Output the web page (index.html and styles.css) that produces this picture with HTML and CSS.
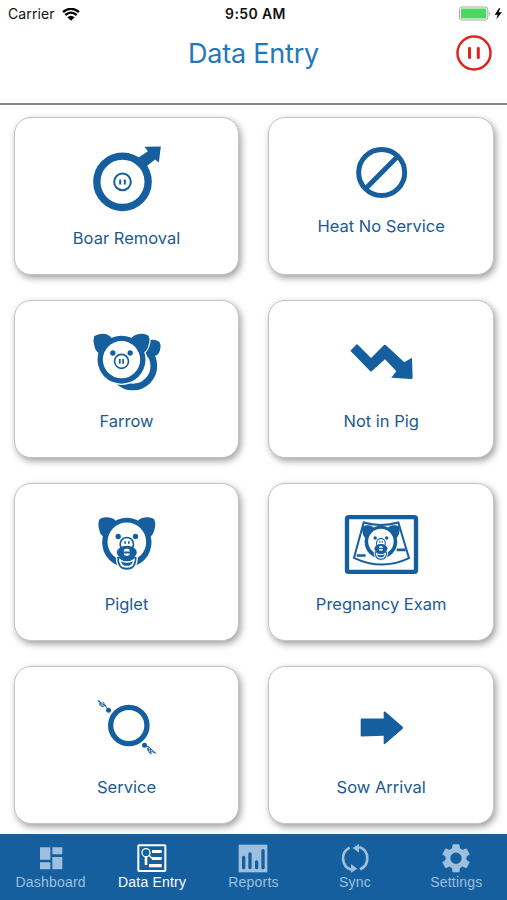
FILE: index.html
```
<!DOCTYPE html>
<html lang="en">

<head>
	<meta charset="UTF-8">
	<title>Data Entry</title>
	<link rel="stylesheet" href="styles.css">
</head>

<body>
	<header>
		<div class="status">
			<div class="carrier">
				<span>Carrier</span>
				<svg width="18" height="13" viewBox="0 0 54 39">
					<path d="M3 12Q27 -7 51 12M10 21Q27 7 44 21" fill="none" stroke="#000" stroke-width="7" />
					<path d="M16 28Q27 19 38 28L27 38Z" />
				</svg>
			</div>
			<div class="time">9:50 AM</div>
			<div class="battery">
				<svg width="44" height="16" viewBox="0 0 132 48">
					<rect x="1.5" y="3" width="85" height="39" rx="8" fill="#fff" stroke="#a3a5a3" stroke-width="3" />
					<rect x="6" y="7.500" width="76" height="30" rx="3" fill="#4cd662" />
					<path d="M90 17q6 6 0 12z" fill="#999" />
					<path d="M120 7L107 26h9l-4 14 17-21h-10l5-12z" />
				</svg>
			</div>
		</div>
		<div class="title">
			<h1>Data Entry</h1>
			<svg class="snout" width="36" height="36" viewBox="0 0 36 36">
				<circle cx="18" cy="18" r="16.500" fill="none" stroke="#dc2721" stroke-width="2.500" />
				<path d="M13.500 13.200v9.200M22.300 13.200v9.200" stroke="#dc2721" stroke-width="3" stroke-linecap="round" />
			</svg>
		</div>
	</header>

	<main>
		<a class="card">
			<svg viewBox="229.500 94.500 300 240">
				<circle class="line" cx="366" cy="229" r="77" stroke-width="22" />
				<path d="M432 124L481 123 475 171 464 162 437 183 409 160 442 137Z" />
				<circle class="line" cx="366" cy="229" r="25" stroke-width="6" />
				<path class="line" d="M359 222v15M373 222v15" stroke-width="6" />
			</svg>
			<span>Boar Removal</span>
		</a>
		<a class="card high">
			<svg viewBox="213 94.500 300 240">
				<circle class="line" cx="365" cy="201" r="69" stroke-width="15" />
				<path class="line" d="M412 154L318 248" stroke-width="15" />
			</svg>
			<span>Heat No Service</span>
		</a>
		<a class="card">
			<svg viewBox="-10.500 0 300 240">
				<!-- sow behind -->
				<circle class="ring" cx="157" cy="138" r="63" stroke-width="20" />
				<path d="M200 62C212 57 227 58 236 65C243 74 240 88 236 97Q232 107 222 108L200 112Z" />
				<!-- sow in front -->
				<circle class="white" cx="123" cy="119" r="76" />
				<path class="ear" d="M41 49C55 40 76 38 88 49L100 60 62 104C46 96 43 84 41 75Q37 62 41 49ZM158 49C170 40 190 39 204 47Q210 60 204 76C201 88 197 95 186 100L146 60Z" />
				<circle cx="123" cy="119" r="72" />
				<circle class="white" cx="123" cy="119" r="56" />
				<circle cx="97" cy="99" r="8" />
				<circle cx="149" cy="99" r="8" />
				<circle class="line" cx="123" cy="124" r="21" stroke-width="5" />
				<path class="line" d="M118 117v14M128 117v14" stroke-width="5" />
			</svg>
			<span>Farrow</span>
		</a>
		<a class="card">
			<svg viewBox="-12 0 300 240">
				<path d="M46 92L65 73Q68 73 70 76L108 114 147 75Q150 73 153 76L208 127 228 115Q231 113 231 117L233 173Q232 177 228 177L169 173Q169 171 171 170L184 154 150 118 110 154Q108 156 105 153Z" />
			</svg>
			<span>Not in Pig</span>
		</a>
		<a class="card">
			<svg viewBox="-10.500 -4.500 300 240">
				<g id="piglet">
					<path d="M57 44C70 36 92 36 104 47L116 58 78 102C61 94 58 84 56 74Q51 58 57 44ZM221 44C208 36 186 36 174 47L162 58 202 102C217 94 219 84 222 74Q227 58 221 44Z" />
					<circle cx="139" cy="114" r="74" />
					<circle class="white" cx="139" cy="112" r="58" />
					<circle cx="113" cy="96" r="8" />
					<circle cx="165" cy="96" r="8" />
					<circle class="ring" cx="139" cy="119" r="20" stroke-width="5" />
					<path class="line" d="M134 110v8M145 110v8" stroke-width="5" />
					<path d="M108 155Q107 198 139 198Q171 198 170 155Z" stroke="#fff" stroke-width="4" />
					<path class="white" d="M115 161Q139 180 163 161Q163 190 139 190Q115 190 115 161Z" />
					<path d="M121 170Q139 180 157 170Q154 184 139 184Q124 184 121 170Z" />
					<ellipse cx="139" cy="144" rx="30" ry="20" />
					<rect class="white" x="130" y="133" width="18" height="21" rx="7" />
					<path class="line" d="M129 144h20" stroke-width="6" />
				</g>
			</svg>
			<span>Piglet</span>
		</a>
		<a class="card">
			<svg viewBox="-12 -4.500 300 240">
				<rect class="line" x="36" y="38" width="207" height="164" rx="5" stroke-width="13" />
				<path class="line" d="M86 54Q137 69 190 54L222 161Q140 200 57 160Z" stroke-width="6" />
				<path class="line" d="M65 153h27M185 136h27" stroke-width="8" />
				<use href="#piglet" transform="translate(46 37) scale(.66)" />
			</svg>
			<span>Pregnancy Exam</span>
		</a>
		<a class="card">
			<svg viewBox="-10.500 -10.500 300 240">
				<circle class="line" cx="145" cy="108" r="54.500" stroke-width="16" />
				<circle cx="84" cy="62" r="7.500" />
				<circle cx="192" cy="167" r="7.500" />
				<path class="line" d="M81 58L73 48 65 42 53 34M67 37l10 14M55 41l6 0-4 6 8-1-1 6 9-4M52 34l7 2" stroke-width="3" />
				<path class="line" d="M194 169L206 172 214 181 225 191M199 174l9 18M205 174l-2 9 9-4-3 11 8-6M216 187l10 4M209 195l5-5" stroke-width="3" />
			</svg>
			<span>Service</span>
		</a>
		<a class="card">
			<svg viewBox="-12 -10.500 300 240">
				<path d="M80 87H146V68Q147 64 151 67L203 112Q206 115 203 118L151 163Q147 166 146 161V139L80 141Q77 141 77 138V90Q77 87 80 87Z" />
			</svg>
			<span>Sow Arrival</span>
		</a>
	</main>

	<nav>
		<a class="tab">
			<svg viewBox="0 0 90 90">
				<path d="M12 10h31v37H12zM12 55h31v21H12zM49 10h30v21H49zM49 39h30v37H49z" />
			</svg>
			<span>Dashboard</span>
		</a>
		<a class="tab active">
			<svg viewBox="0 0 90 90">
				<rect x="4" y="4" width="81" height="77" rx="2" fill="none" stroke="currentColor" stroke-width="6" />
				<circle cx="27" cy="26" r="12" fill="none" stroke="currentColor" stroke-width="4" />
				<path d="M23 39h8v24h-8zM45 18h29v9H45zM45 39h29v9H45zM36 60h38v10H36z" />
				<path d="M36 34l10 10" stroke="currentColor" stroke-width="4" />
			</svg>
			<span>Data Entry</span>
		</a>
		<a class="tab">
			<svg viewBox="0 0 90 90">
				<rect x="2" y="2" width="86" height="83" />
				<path class="bars" d="M17 40v31M36 30v41M56 54v17M75 20v51" />
			</svg>
			<span>Reports</span>
		</a>
		<a class="tab">
			<svg viewBox="0 0 90 90">
				<path d="M33 77A36 36 0 0 1 29 11M58 9A36 36 0 0 1 60 76" fill="none" stroke="currentColor" stroke-width="8" />
				<path d="M57 0V26L38 12ZM33 86V60L52 74Z" />
			</svg>
			<span>Sync</span>
		</a>
		<a class="tab">
			<svg viewBox="1.700 2.200 20.600 20.600">
				<path d="M19.140 12.940c.04-.3.060-.61.060-.94 0-.32-.02-.64-.07-.94l2.030-1.580c.18-.14.23-.41.120-.61l-1.920-3.320c-.12-.22-.37-.29-.59-.22l-2.390.960c-.5-.38-1.030-.7-1.620-.94l-.36-2.540c-.04-.24-.24-.41-.48-.41h-3.840c-.24 0-.43.170-.47.410l-.36 2.540c-.59.240-1.130.570-1.620.940l-2.390-.96c-.22-.08-.47 0-.59.220L2.740 8.870c-.12.210-.08.470.120.610l2.030 1.580c-.05.300-.09.630-.09.940s.02.640.070.940l-2.030 1.580c-.18.140-.23.410-.12.610l1.920 3.320c.12.220.370.290.590.220l2.390-.96c.5.380 1.030.700 1.620.940l.36 2.540c.05.240.240.410.480.410h3.840c.24 0 .44-.17.470-.41l.36-2.540c.59-.24 1.130-.56 1.620-.94l2.390.960c.22.080.470 0 .59-.22l1.920-3.320c.12-.22.070-.47-.12-.61l-2.010-1.580zM12 15.900a3.900 3.900 0 1 1 0-7.800 3.900 3.900 0 0 1 0 7.800z" />
			</svg>
			<span>Settings</span>
		</a>
	</nav>
</body>

</html>
```

FILE: styles.css
```
* {
	box-sizing: border-box;
}

body {
	display: flex;
	flex-direction: column;
	height: 900px;
	margin: 0;
	overflow: hidden;
	font-family: Inter, sans-serif;
	background-color: #fff;
}

header {
	flex: none;
	height: 105px;
	border-bottom: 2px solid #858585;
}

.status {
	display: grid;
	grid-template-columns: 1fr auto 1fr;
	align-items: center;
	height: 28px;
	padding: 0 4px 0 8px;
	font-size: 14px;
	color: #111;
}

.carrier {
	display: flex;
	align-items: center;
	gap: 7px;
	letter-spacing: 0.1px;
}

.carrier span {
	padding-bottom: 1px;
}

.time {
	padding-bottom: 1px;
	font-weight: 600;
	letter-spacing: 0.4px;
}

.battery {
	display: flex;
	justify-content: flex-end;
	padding-bottom: 1px;
}

.title {
	display: grid;
	grid-template-columns: 1fr auto 1fr;
	align-items: center;
	height: 50px;
	padding: 0 15px;
}

h1 {
	grid-column: 2;
	margin: 0;
	font-size: 27px;
	font-weight: 400;
	letter-spacing: -0.2px;
	color: #2277bd;
}

.snout {
	justify-self: end;
	margin-bottom: 1px;
}

main {
	flex: 1;
	display: grid;
	grid-template-columns: 1fr 1fr;
	grid-auto-rows: 158px;
	gap: 25.200px 29px;
	min-height: 0;
	padding: 11.500px 13px 0 13.700px;
}

.card {
	display: flex;
	flex-direction: column;
	align-items: center;
	padding-top: 19px;
	border: 1px solid #c4c4c4;
	border-radius: 17px;
	background-color: #fff;
	box-shadow: 2px 3px 7px rgba(0, 0, 0, 0.38);
	font-size: 16.500px;
	color: #215a91;
}

.card svg {
	flex: none;
	width: 100px;
	height: 80px;
	margin-bottom: 11px;
	fill: #165f9f;
}

.card span {
	line-height: 20px;
}

.card.high svg {
	margin-bottom: -1px;
}

.card .line {
	fill: none;
	stroke: #165f9f;
}

.card .ring {
	fill: #fff;
	stroke: #165f9f;
}

.card .ear {
	stroke: #fff;
	stroke-width: 7;
	paint-order: stroke;
}

.card .white {
	fill: #fff;
}

nav {
	flex: none;
	display: grid;
	grid-template-columns: repeat(5, 1fr);
	height: 66px;
	background-color: #165f9f;
	z-index: 1;
}

.tab {
	display: flex;
	flex-direction: column;
	align-items: center;
	padding-top: 10px;
	font-family: "Liberation Sans", sans-serif;
	font-size: 14px;
	letter-spacing: 0.2px;
	color: #9dc0de;
}

.tab svg {
	width: 30px;
	height: 30px;
	fill: currentColor;
}

.tab span {
	line-height: 17px;
}

.active {
	color: #fff;
}

.bars {
	stroke: #165f9f;
	stroke-width: 10;
	stroke-linecap: round;
}
```
